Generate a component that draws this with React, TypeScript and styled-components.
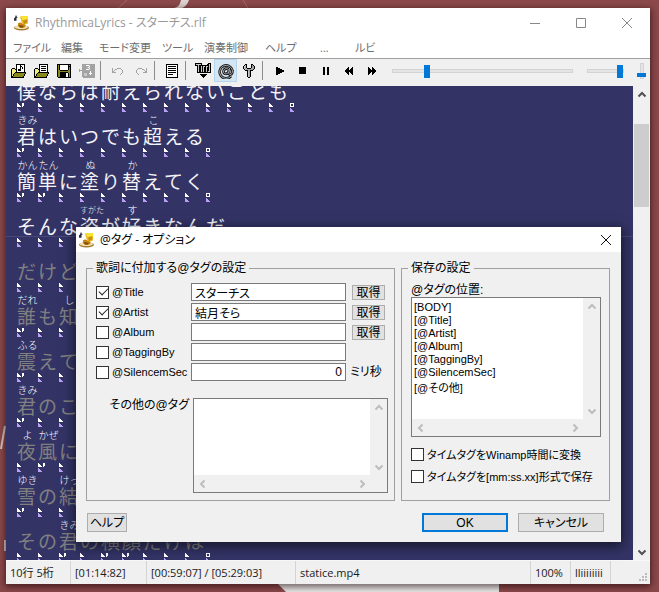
import React, { useState } from "react";
import styled, { createGlobalStyle, css } from "styled-components";

const GlobalStyle = createGlobalStyle`
  * { box-sizing: border-box; }
  body { margin: 0; background: #8c494b; overflow: hidden; }
  button, input, select, textarea { font: inherit; color: inherit; margin: 0; }
`;

const uiFont = `"Open Sans", "Noto Sans CJK JP", sans-serif`;
const dialogFont = `"Liberation Sans", "Noto Sans CJK JP", sans-serif`;

/* ---------- drawings ---------- */

const palette: Record<string, string> = {
  k: "#000000",
  y: "#f0f080",
  o: "#8a8a1c",
  w: "#ffffff",
  g: "#a3a3a3",
  s: "#c8c8c8",
  p: "#b9a0f2",
};

const Bitmap = styled.svg`
  display: block;
  flex: none;
`;

function PixelIcon({ rows }: { rows: string[] }) {
  const w = rows[0].length;
  return (
    <Bitmap width={w} height={rows.length} viewBox={`0 0 ${w} ${rows.length}`} shapeRendering="crispEdges" aria-hidden>
      {rows.flatMap((row, y) =>
        row.split("").map((c, x) =>
          palette[c] ? <rect key={`${x}-${y}`} x={x} y={y} width={1} height={1} fill={palette[c]} /> : null,
        ),
      )}
    </Bitmap>
  );
}

const openMusic = [
  "......kkkkkkkkk.",
  "......kwwwkwwwk.",
  "......kwwwkkwwk.",
  "......kwwwkwkwk.",
  "..kkk.kwwwkwkwk.",
  ".kyyykkwkkkwwwk.",
  ".kyyyykwkkkwwwk.",
  ".kyyyykwwwwwwwk.",
  ".kyyykkkkkkkkkkk",
  ".kyykooooooooook",
  ".kykooooooooook.",
  ".kykooooooooook.",
  ".kkooooooooook..",
  ".kkkkkkkkkkkkk..",
];
const openText = [
  "......kkkkkkkkk.",
  "......kwwwwwwwk.",
  "......kwkkkkkwk.",
  "......kwwwwwwwk.",
  "..kkk.kwkkkkkwk.",
  ".kyyykkwwwwwwwk.",
  ".kyyyykwkkkkkwk.",
  ".kyyyykwwwwwwwk.",
  ".kyyykkkkkkkkkkk",
  ".kyykooooooooook",
  ".kykooooooooook.",
  ".kykooooooooook.",
  ".kkooooooooook..",
  ".kkkkkkkkkkkkk..",
];
const floppy = [
  "kkkkkkkkkkkkkk",
  "kokwwwwwwwwkok",
  "kokwwwwwwwwkkk",
  "kokwwwwwwwwkok",
  "kokwwwwwwwwkok",
  "kokwwwwwwwwkok",
  "kookkkkkkkkook",
  "kooooooooooook",
  "kookkkkkkkkook",
  "kookkkkkkwwkok",
  "kookkkkkkwwkok",
  "kookkkkkkwwkok",
  "kookkkkkkwwkok",
  ".kkkkkkkkkkkkk",
];
const saveDisabled = [
  "...ggggggggggggg",
  "...ggggwwwsggggg",
  "...gggggggwggggg",
  "...gggggswsggggg",
  "...gggggggwggggg",
  "g..ggggwwwsggggg",
  "gggggggggggggggg",
  "g..ggggggggwgggg",
  "...ggggggggwgggg",
  "...ggsssggwwwggg",
  "...ggsssgggwgggg",
  "...ggsssgggggggg",
  "...ggggggggggggg",
  "....gggggggggggg",
];
const undoIcon = [
  "............",
  "g....gggg...",
  "g..gg....g..",
  "g.g.......g.",
  "gg........g.",
  "gggg......g.",
  ".........g..",
  "........g...",
];
const redoIcon = undoIcon.map((r) => r.split("").reverse().join(""));
const docIcon = [
  "kkkkkkkkkkkk",
  "kwwwwwwwwwwk",
  "kwkkkkkkkkwk",
  "kwwwwwwwwwwk",
  "kwkkkkkkkkwk",
  "kwwwwwwwwwwk",
  "kwkkkkkkkkwk",
  "kwwwwwwwwwwk",
  "kwkkkkkkkkwk",
  "kwwwwwwwwwwk",
  "kwkkkkkwwwwk",
  "kwwwwwwwwwwk",
  "kwwwwwwwwwwk",
  "kkkkkkkkkkkk",
];
const tagIcon = [
  "kkkkkkk......kkk",
  "ksssssk.....kksk",
  "kkkskkkkkkkkkksk",
  "..kskksksskssksk",
  "..kskkskskkskksk",
  "..kskkskskkskksk",
  "..kskkskskkskksk",
  "..kskkskskkskksk",
  "..kskkskskkskssk",
  "..kkkkkkkkkkkkkk",
  "................",
  ".....kkkkkkk....",
  "......kkkkk.....",
  ".......kkk......",
  "........k.......",
];
const wrenchIcon = [
  "..kk....kk..",
  ".ksk....kgk.",
  "kssk....kggk",
  "ksgk....kggk",
  "ksggkkkkgggk",
  ".ksgggggggk.",
  "..kkkggkkk..",
  "....ksgk....",
  "....ksgk....",
  "....ksgk....",
  "....ksgk....",
  "....ksgk....",
  "....ksgk....",
  ".....kk.....",
];
const playIcon = ["kk......", "kkkk....", "kkkkkk..", "kkkkkkkk", "kkkkkkkk", "kkkkkk..", "kkkk....", "kk......"];
const stopIcon = Array(7).fill("kkkkkkk");
const pauseIcon = Array(8).fill("kk..kk");
const rewindIcon = ["...k...k", "..kk..kk", ".kkk.kkk", "kkkkkkkk", "kkkkkkkk", ".kkk.kkk", "..kk..kk", "...k...k"];
const forwardIcon = rewindIcon.map((r) => r.split("").reverse().join(""));

const marks = {
  single: ["w.......", "ww......", "www.....", "wwww....", "........", "p.......", "pp......", "ppp.....", "pppp...."],
  double: ["w....ww.", "ww...ww.", "www..ww.", "wwww.w..", "........", "p.......", "pp......", "ppp.....", "pppp...."],
  end: ["wwww....", "w..w....", "w..w....", "wwww....", "........", "p.......", "pp......", "ppp.....", "pppp...."],
};

function AtIcon() {
  return (
    <Bitmap width="16" height="16" viewBox="0 0 16 16" fill="none" aria-hidden>
      <path
        d="M13 13.200A6.500 6.500 0 1 1 14.500 7.500c0 3-1 4-2.300 4s-1.500-1-1.200-2.600l.6-3.900M10.800 7.500c-.4-2.600-4.400-2.600-5.300.5-.6 3.100 4 4.200 5.300.5"
        stroke="#111"
        strokeWidth="2.600"
      />
      <path
        d="M13 13.200A6.500 6.500 0 1 1 14.500 7.500c0 3-1 4-2.300 4s-1.500-1-1.200-2.600l.6-3.900M10.800 7.500c-.4-2.600-4.400-2.600-5.300.5-.6 3.100 4 4.200 5.300.5"
        stroke="#d0d0d0"
        strokeWidth=".8"
      />
    </Bitmap>
  );
}

function AppIcon() {
  return (
    <Bitmap width="17" height="16" viewBox="0 0 17 16" aria-hidden>
      <path d="M7 1.500 15 1v7.500L11 10 8.500 7z" fill="#e9bd1c" />
      <path d="M8 1.500 15 1v3L9.500 5z" fill="#f7e52e" />
      <path d="M10 5.500l4-1v3l-3 1.500z" fill="#c98c14" />
      <path d="M1 3.200c1-.2 1.500-1.200 1.500-2.700h1c0 1 .5 1.500 1.500 2.300H3.500v3H1z" fill="#2a2a33" />
      <ellipse cx="8.500" cy="12.800" rx="7.500" ry="2.600" fill="#a57b2f" />
      <ellipse cx="8.300" cy="12.200" rx="6.500" ry="1.900" fill="#efe0b4" />
      <path d="M5 8.500c1.500-1.500 3-1 4.500 0l3 1.500c.5 2-1 3-4 3-2.500 0-4-1.500-3.500-4.500z" fill="#c7850f" />
      <path d="M6 10l5 1-1.500 1.500c-2 .2-3.300-.5-3.500-2.500z" fill="#7d4a0a" />
    </Bitmap>
  );
}

type Dir = "up" | "down" | "left" | "right";
const chevrons: Record<Dir, string> = {
  up: "M1.500 6.500 5 3l3.500 3.500",
  down: "M1.500 3.500 5 7l3.500-3.500",
  left: "M6.500 1.500 3 5l3.500 3.500",
  right: "M3.500 1.500 7 5 3.500 8.500",
};
function Chevron({ dir, color }: { dir: Dir; color: string }) {
  return (
    <Bitmap width="10" height="10" viewBox="0 0 10 10" fill="none" aria-hidden>
      <path d={chevrons[dir]} stroke={color} strokeWidth="2" />
    </Bitmap>
  );
}

/* ---------- desktop and main window ---------- */

const Desktop = styled.div`
  position: relative;
  height: 100vh;
  padding: 8px 9px 8px 6px;
  background: #8c494b;
`;

const Wallpaper = styled.svg`
  position: absolute;
  inset: 0;
  width: 100%;
  height: 100%;
`;

const Window = styled.main`
  position: relative;
  display: flex;
  flex-direction: column;
  height: 100%;
  background: #f0f0f0;
  font: 12px/16px ${uiFont};
  font-feature-settings: "palt";
  color: #1a1a1a;
  box-shadow: 0 2px 7px 1px rgba(20, 0, 0, 0.6);
`;

const TitleBar = styled.header`
  display: flex;
  align-items: center;
  height: 29px;
  padding-left: 7px;
  background: #fff;
  color: #999;
`;

const Title = styled.h1`
  flex: 1;
  margin: 0 0 0 5px;
  font-size: 12px;
  font-weight: 400;
`;

const CaptionButton = styled.button`
  display: grid;
  place-items: center;
  width: 46px;
  height: 29px;
  padding: 0;
  border: 0;
  background: none;
`;

const MenuBar = styled.nav`
  display: flex;
  height: 22px;
  padding-left: 7px;
  background: #fff;
  border-bottom: 1px solid #a0a0a0;
  font-size: 11px;
`;

const MenuItem = styled.button<{ $w: number }>`
  width: ${(p) => p.$w}px;
  padding: 0;
  border: 0;
  background: none;
  color: #6c6c6c;
  text-align: left;
  white-space: nowrap;
`;

const ToolBar = styled.div`
  display: flex;
  align-items: center;
  height: 27px;
  padding-bottom: 4px;
`;

const ToolButton = styled.button<{ $on?: boolean }>`
  display: grid;
  place-items: center;
  width: 23px;
  height: 23px;
  padding: 0;
  border: 1px solid ${(p) => (p.$on ? "#b5d5ee" : "transparent")};
  background: ${(p) => (p.$on ? "#d5e6f3" : "none")};
`;

const ToolGap = styled.span`
  width: 8px;
  height: 19px;
  background: linear-gradient(#8c8c8c, #8c8c8c) 2px 0 / 1px 100% no-repeat;
`;

const track = css`
  background: #e4e4e4;
  border: 1px solid #d3d3d3;
`;

const Slider = styled.input<{ $grow?: boolean }>`
  appearance: none;
  height: 15px;
  background: none;
  margin-left: ${(p) => (p.$grow ? 9 : 14)}px;
  ${(p) => (p.$grow ? "flex: 1; min-width: 40px;" : "width: 37px;")}
  &::-webkit-slider-runnable-track {
    height: 4px;
    ${track}
  }
  &::-webkit-slider-thumb {
    appearance: none;
    width: 6px;
    height: 13px;
    margin-top: -5px;
    background: #0078d7;
  }
`;

const VerticalSlider = styled.input`
  appearance: none;
  writing-mode: vertical-lr;
  direction: rtl;
  width: 11px;
  height: 16px;
  margin: 0 3px 0 12px;
  background: none;
  &::-webkit-slider-runnable-track {
    width: 4px;
    ${track}
  }
  &::-webkit-slider-thumb {
    appearance: none;
    width: 9px;
    height: 4px;
    margin-left: -4px;
    background: #0078d7;
  }
`;

const Editor = styled.section`
  flex: 1;
  min-height: 0;
  display: grid;
  grid-template-columns: 1fr 17px;
`;

const Lyrics = styled.div`
  position: relative;
  overflow: hidden;
  padding-left: 11px;
  background: #333366;
  font-family: "Noto Sans CJK JP", sans-serif;
  font-feature-settings: normal;
`;

const CursorLine = styled.div`
  position: absolute;
  left: 0;
  right: 0;
  top: 150px;
  height: 1px;
  background: #48487a;
`;

const LyricPage = styled.div`
  margin-top: -17px;
`;

const LyricLine = styled.p<{ $dim: boolean }>`
  display: flex;
  height: 45px;
  margin: 0;
  color: ${(p) => (p.$dim ? "#808080" : "#f4f4f8")};
`;

const Cell = styled.span`
  display: grid;
  grid-template-rows: 12px 22px 11px;
  width: 21px;
`;

const Furigana = styled.span<{ $tight: boolean }>`
  justify-self: center;
  font-size: ${(p) => (p.$tight ? 8 : 10)}px;
  font-weight: 300;
  line-height: 12px;
  color: #fff;
  white-space: nowrap;
`;

const Glyph = styled.span`
  font-size: 19px;
  line-height: 20px;
`;

const Scroller = styled.div<{ $horizontal?: boolean }>`
  display: flex;
  flex-direction: ${(p) => (p.$horizontal ? "row" : "column")};
  background: #f0f0f0;
`;

const ScrollButton = styled.button`
  display: grid;
  place-items: center;
  flex: none;
  width: 17px;
  height: 17px;
  padding: 0;
  border: 0;
  background: none;
`;

const ScrollTrack = styled.div`
  flex: 1;
`;

const ScrollThumb = styled.div`
  width: 15px;
  height: 83px;
  margin: 21px 1px 0;
  background: #cdcdcd;
`;

const StatusBar = styled.footer`
  display: flex;
  height: 24px;
  border-top: 1px solid #f8f8f8;
  font-size: 11px;
`;

const StatusCell = styled.span<{ $w?: number }>`
  ${(p) => (p.$w ? `width: ${p.$w}px;` : "flex: 1;")}
  padding: 4px 0 0 4px;
  border-right: 1px solid #d4d4d4;
  white-space: nowrap;
`;

const Grip = styled.span`
  display: grid;
  align-items: end;
  justify-items: end;
  width: 39px;
  padding: 2px;
`;

/* ---------- dialog ---------- */

const Dialog = styled.section`
  position: absolute;
  top: 219px;
  left: 70px;
  right: 29px;
  background: #f0f0f0;
  color: #000;
  font: 12px/14px ${dialogFont};
  font-feature-settings: "palt";
  box-shadow: 0 3px 12px 1px rgba(0, 0, 0, 0.6);
`;

const DialogTitle = styled.header`
  display: flex;
  align-items: center;
  gap: 5px;
  height: 25px;
  padding: 0 9px 0 2px;
  background: #fff;
`;

const DialogHeading = styled.h2`
  flex: 1;
  margin: 0;
  font-family: ${uiFont};
  font-size: 12px;
  font-weight: 400;
`;

const CloseButton = styled.button`
  padding: 0;
  border: 0;
  background: none;
`;

const DialogBody = styled.form`
  padding: 9px 11px 10px 10px;
`;

const Groups = styled.div`
  display: grid;
  grid-template-columns: 309fr 209fr;
  gap: 6px;
`;

const Group = styled.fieldset<{ $right: number }>`
  min-width: 0;
  margin: 0;
  padding: 8px ${(p) => p.$right}px 7px 9px;
  border: 1px solid #a0a0a0;
`;

const Legend = styled.legend`
  margin-left: -3px;
  padding: 0 3px;
  line-height: 14px;
`;

const FieldRow = styled.div`
  display: grid;
  grid-template-columns: 95px 1fr 33px;
  align-items: center;
  height: 18px;
  margin: 0 3px 2px 0;
`;

const CheckLabel = styled.label`
  display: flex;
  align-items: center;
  gap: 3px;
  font-size: 11px;
  white-space: nowrap;
`;

const OptionLabel = styled(CheckLabel)`
  height: 13px;
  margin-top: 9px;
`;

const CheckBox = styled.input`
  appearance: none;
  position: relative;
  flex: none;
  width: 13px;
  height: 13px;
  border: 1px solid #333;
  background: #fff;
  &:checked::after {
    content: "";
    position: absolute;
    left: 2px;
    top: 1px;
    width: 8px;
    height: 4px;
    border: solid #222;
    border-width: 0 0 1px 1px;
    transform: rotate(-45deg);
  }
`;

const TextBox = styled.input<{ $right?: boolean }>`
  min-width: 0;
  height: 18px;
  margin-right: 6px;
  padding: 0 3px;
  border: 1px solid #7a7a7a;
  background: #fff;
  text-align: ${(p) => (p.$right ? "right" : "left")};
`;

const PushButton = styled.button<{ $w: number; $h: number; $primary?: boolean }>`
  display: grid;
  place-items: center;
  width: ${(p) => p.$w}px;
  height: ${(p) => p.$h}px;
  padding: 0;
  border: ${(p) => (p.$primary ? "2px solid #0078d7" : "1px solid #adadad")};
  background: #e1e1e1;
  white-space: nowrap;
`;

const Unit = styled.span`
  margin-left: -2px;
  white-space: nowrap;
`;

const OtherRow = styled.div`
  display: grid;
  grid-template-columns: 97px 1fr;
  margin-top: 17px;
`;

const OtherLabel = styled.label`
  padding-right: 4px;
  text-align: right;
  white-space: nowrap;
`;

const ScrollFrame = styled.div<{ $h: number }>`
  display: grid;
  grid-template: minmax(0, 1fr) 17px / minmax(0, 1fr) 17px;
  height: ${(p) => p.$h}px;
  border: 1px solid #7a7a7a;
  background: #f0f0f0;
`;

const TextArea = styled.textarea`
  width: 100%;
  height: 100%;
  padding: 2px;
  border: 0;
  background: #fff;
  resize: none;
`;

const ListLabel = styled.label`
  display: block;
`;

const ListBox = styled.select`
  width: 100%;
  height: 100%;
  padding: 3px 0 0;
  border: 0;
  border-radius: 0;
  background: #fff;
  outline: 0;
  overflow: hidden;
  font-size: 11px;
  option {
    height: 13px;
    min-height: 13px;
    padding: 0 2px;
    line-height: 13px;
  }
`;

const OptionList = styled.div`
  padding-top: 2px;
`;

const DialogFooter = styled.footer`
  display: flex;
  gap: 10px;
  margin-top: 12px;
  padding: 0 6px 0 1px;
`;

const Spacer = styled.span`
  flex: 1;
`;

/* ---------- data ---------- */

type Ruby = { at: number; text: string; tight?: boolean };
type Line = { text: string; ruby?: Ruby[]; double?: number[]; dim?: boolean };

const lines: Line[] = [
  { text: "僕ならば耐えられないことも", double: [0] },
  { text: "君はいつでも超える", ruby: [{ at: 0, text: "きみ" }, { at: 6, text: "こ" }], double: [0] },
  {
    text: "簡単に塗り替えてく",
    ruby: [{ at: 0, text: "かん" }, { at: 1, text: "たん" }, { at: 3, text: "ぬ" }, { at: 5, text: "か" }],
    double: [0, 1],
  },
  { text: "そんな姿が好きなんだ", ruby: [{ at: 3, text: "すがた", tight: true }, { at: 5, text: "す" }] },
  { text: "だけど", dim: true },
  { text: "誰も知", ruby: [{ at: 0, text: "だれ" }, { at: 2, text: "し" }], double: [0], dim: true },
  { text: "震えて", ruby: [{ at: 0, text: "ふる" }], double: [0], dim: true },
  { text: "君のこ", ruby: [{ at: 0, text: "きみ" }], double: [0], dim: true },
  { text: "夜風に", ruby: [{ at: 0, text: "よ" }, { at: 1, text: "かぜ" }], double: [1], dim: true },
  { text: "雪の結", ruby: [{ at: 0, text: "ゆき" }, { at: 2, text: "けっ" }], double: [0], dim: true },
  { text: "その君の横顔だけは", ruby: [{ at: 2, text: "きみ" }], double: [2, 4, 5], dim: true },
];

const menus = [
  { label: "ファイル", w: 48 },
  { label: "編集", w: 38 },
  { label: "モード変更", w: 63 },
  { label: "ツール", w: 42 },
  { label: "演奏制御", w: 61 },
  { label: "ヘルプ", w: 55 },
  { label: "...", w: 35 },
  { label: "ルビ", w: 30 },
];

type Tool = { name: string; rows?: string[]; on?: boolean; gap?: boolean };
const tools: Tool[] = [
  { name: "音楽ファイルを開く", rows: openMusic },
  { name: "歌詞ファイルを開く", rows: openText },
  { name: "保存", rows: floppy },
  { name: "変換保存", rows: saveDisabled },
  { name: "元に戻す", rows: undoIcon, gap: true },
  { name: "やり直し", rows: redoIcon },
  { name: "テキスト", rows: docIcon, gap: true },
  { name: "タグ", rows: tagIcon, gap: true },
  { name: "@タグ", on: true },
  { name: "設定", rows: wrenchIcon },
  { name: "再生", rows: playIcon, gap: true },
  { name: "停止", rows: stopIcon },
  { name: "一時停止", rows: pauseIcon },
  { name: "巻き戻し", rows: rewindIcon },
  { name: "早送り", rows: forwardIcon },
];

const fields = [
  { id: "title", label: "@Title", value: "スターチス", checked: true, fetch: true },
  { id: "artist", label: "@Artist", value: "結月そら", checked: true, fetch: true },
  { id: "album", label: "@Album", value: "", checked: false, fetch: true },
  { id: "tagging", label: "@TaggingBy", value: "", checked: false },
  { id: "silence", label: "@SilencemSec", value: "0", checked: false, unit: "ミリ秒" },
];

const positions = ["[BODY]", "[@Title]", "[@Artist]", "[@Album]", "[@TaggingBy]", "[@SilencemSec]", "[@その他]"];

/* ---------- parts ---------- */

function LyricRow({ line }: { line: Line }) {
  return (
    <LyricLine $dim={!!line.dim}>
      {[...line.text].map((ch, i) => {
        const ruby = line.ruby?.find((r) => r.at === i);
        return (
          <Cell key={i}>
            <Furigana $tight={!!ruby?.tight}>{ruby?.text}</Furigana>
            <Glyph>{ch}</Glyph>
            <PixelIcon rows={line.double?.includes(i) ? marks.double : marks.single} />
          </Cell>
        );
      })}
      <Cell>
        <span />
        <span />
        <PixelIcon rows={marks.end} />
      </Cell>
    </LyricLine>
  );
}

function ScrollBar({ horizontal, color = "#bdbdbd", thumb }: { horizontal?: boolean; color?: string; thumb?: boolean }) {
  return (
    <Scroller $horizontal={horizontal}>
      <ScrollButton type="button" aria-label={horizontal ? "左へ" : "上へ"}>
        <Chevron dir={horizontal ? "left" : "up"} color={color} />
      </ScrollButton>
      <ScrollTrack>{thumb && <ScrollThumb />}</ScrollTrack>
      <ScrollButton type="button" aria-label={horizontal ? "右へ" : "下へ"}>
        <Chevron dir={horizontal ? "right" : "down"} color={color} />
      </ScrollButton>
    </Scroller>
  );
}

function TagDialog() {
  const [checks, setChecks] = useState<Record<string, boolean>>(
    Object.fromEntries(fields.map((f) => [f.id, f.checked])),
  );
  return (
    <Dialog role="dialog" aria-labelledby="dialog-title">
      <DialogTitle>
        <AppIcon />
        <DialogHeading id="dialog-title">@タグ - オプション</DialogHeading>
        <CloseButton type="button" aria-label="閉じる">
          <Bitmap width="12" height="12" viewBox="0 0 12 12" aria-hidden>
            <path d="M1 1l10 10M11 1L1 11" stroke="#111" />
          </Bitmap>
        </CloseButton>
      </DialogTitle>
      <DialogBody onSubmit={(e) => e.preventDefault()}>
        <Groups>
          <Group $right={6}>
            <Legend>歌詞に付加する@タグの設定</Legend>
            {fields.map((f) => (
              <FieldRow key={f.id}>
                <CheckLabel>
                  <CheckBox
                    type="checkbox"
                    checked={checks[f.id]}
                    onChange={(e) => setChecks({ ...checks, [f.id]: e.target.checked })}
                  />
                  {f.label}
                </CheckLabel>
                <TextBox aria-label={f.label} defaultValue={f.value} $right={!!f.unit} />
                {f.fetch && (
                  <PushButton type="button" $w={33} $h={15}>
                    取得
                  </PushButton>
                )}
                {f.unit && <Unit>{f.unit}</Unit>}
              </FieldRow>
            ))}
            <OtherRow>
              <OtherLabel htmlFor="other-tags">その他の@タグ</OtherLabel>
              <ScrollFrame $h={95}>
                <TextArea id="other-tags" />
                <ScrollBar />
                <ScrollBar horizontal />
              </ScrollFrame>
            </OtherRow>
          </Group>
          <Group $right={8}>
            <Legend>保存の設定</Legend>
            <ListLabel htmlFor="tag-position">@タグの位置:</ListLabel>
            <ScrollFrame $h={140}>
              <ListBox id="tag-position" size={8}>
                {positions.map((p) => (
                  <option key={p}>{p}</option>
                ))}
              </ListBox>
              <ScrollBar />
              <ScrollBar horizontal />
            </ScrollFrame>
            <OptionList>
              <OptionLabel>
                <CheckBox type="checkbox" />
                タイムタグをWinamp時間に変換
              </OptionLabel>
              <OptionLabel>
                <CheckBox type="checkbox" />
                タイムタグを[mm:ss.xx]形式で保存
              </OptionLabel>
            </OptionList>
          </Group>
        </Groups>
        <DialogFooter>
          <PushButton type="button" $w={40} $h={19}>
            ヘルプ
          </PushButton>
          <Spacer />
          <PushButton type="submit" $w={86} $h={19} $primary>
            OK
          </PushButton>
          <PushButton type="button" $w={86} $h={19}>
            キャンセル
          </PushButton>
        </DialogFooter>
      </DialogBody>
    </Dialog>
  );
}

export default function App() {
  return (
    <Desktop>
      <GlobalStyle />
      <Wallpaper viewBox="0 0 659 592" preserveAspectRatio="none" aria-hidden>
        <path d="M274 580l12 12h213v-12z" fill="#e9e7e7" />
        <path d="M174 8c5-1 6-4 7-8h8c-2 5-4 7-7 8z" fill="#ddd3d0" />
        <path d="M5 426L1 449" stroke="#d8c8c8" strokeWidth="2" />
        <path d="M5 540v11" stroke="#d8c8c8" strokeWidth="2" />
        <path d="M118 8l9-8M243 0l5 8" stroke="#a76a6a" />
      </Wallpaper>
      <Window>
        <TitleBar>
          <AppIcon />
          <Title>RhythmicaLyrics - スターチス.rlf</Title>
          <CaptionButton aria-label="最小化">
            <Bitmap width="10" height="10" viewBox="0 0 10 10" aria-hidden>
              <path d="M0 5.500h10" stroke="#888" />
            </Bitmap>
          </CaptionButton>
          <CaptionButton aria-label="最大化">
            <Bitmap width="10" height="10" viewBox="0 0 10 10" aria-hidden>
              <path d="M.5.500h9v9h-9z" fill="none" stroke="#888" />
            </Bitmap>
          </CaptionButton>
          <CaptionButton aria-label="閉じる">
            <Bitmap width="10" height="10" viewBox="0 0 10 10" aria-hidden>
              <path d="M0 0l10 10M10 0L0 10" stroke="#888" />
            </Bitmap>
          </CaptionButton>
        </TitleBar>
        <MenuBar>
          {menus.map((m) => (
            <MenuItem key={m.label} $w={m.w}>
              {m.label}
            </MenuItem>
          ))}
        </MenuBar>
        <ToolBar>
          {tools.map((t) => (
            <React.Fragment key={t.name}>
              {t.gap && <ToolGap />}
              <ToolButton aria-label={t.name} $on={t.on}>
                {t.rows ? <PixelIcon rows={t.rows} /> : <AtIcon />}
              </ToolButton>
            </React.Fragment>
          ))}
          <Slider type="range" aria-label="再生位置" defaultValue={18} $grow />
          <Slider type="range" aria-label="音量" defaultValue={100} />
          <VerticalSlider type="range" aria-label="速度" defaultValue={10} />
        </ToolBar>
        <Editor>
          <Lyrics>
            <LyricPage>
              {lines.map((l) => (
                <LyricRow key={l.text} line={l} />
              ))}
            </LyricPage>
            <CursorLine />
          </Lyrics>
          <ScrollBar color="#505050" thumb />
        </Editor>
        <StatusBar>
          <StatusCell $w={65}>10行 5桁</StatusCell>
          <StatusCell $w={76}>[01:14:82]</StatusCell>
          <StatusCell $w={149}>[00:59:07] / [05:29:03]</StatusCell>
          <StatusCell>statice.mp4</StatusCell>
          <StatusCell $w={40}>100%</StatusCell>
          <StatusCell $w={40}>lliiiiiiii</StatusCell>
          <Grip>
            <Bitmap width="9" height="9" viewBox="0 0 9 9" fill="#bbb" aria-hidden>
              <path d="M6 0h2v2H6zM3 3h2v2H3zM6 3h2v2H6zM0 6h2v2H0zM3 6h2v2H3zM6 6h2v2H6z" />
            </Bitmap>
          </Grip>
        </StatusBar>
        <TagDialog />
      </Window>
    </Desktop>
  );
}
